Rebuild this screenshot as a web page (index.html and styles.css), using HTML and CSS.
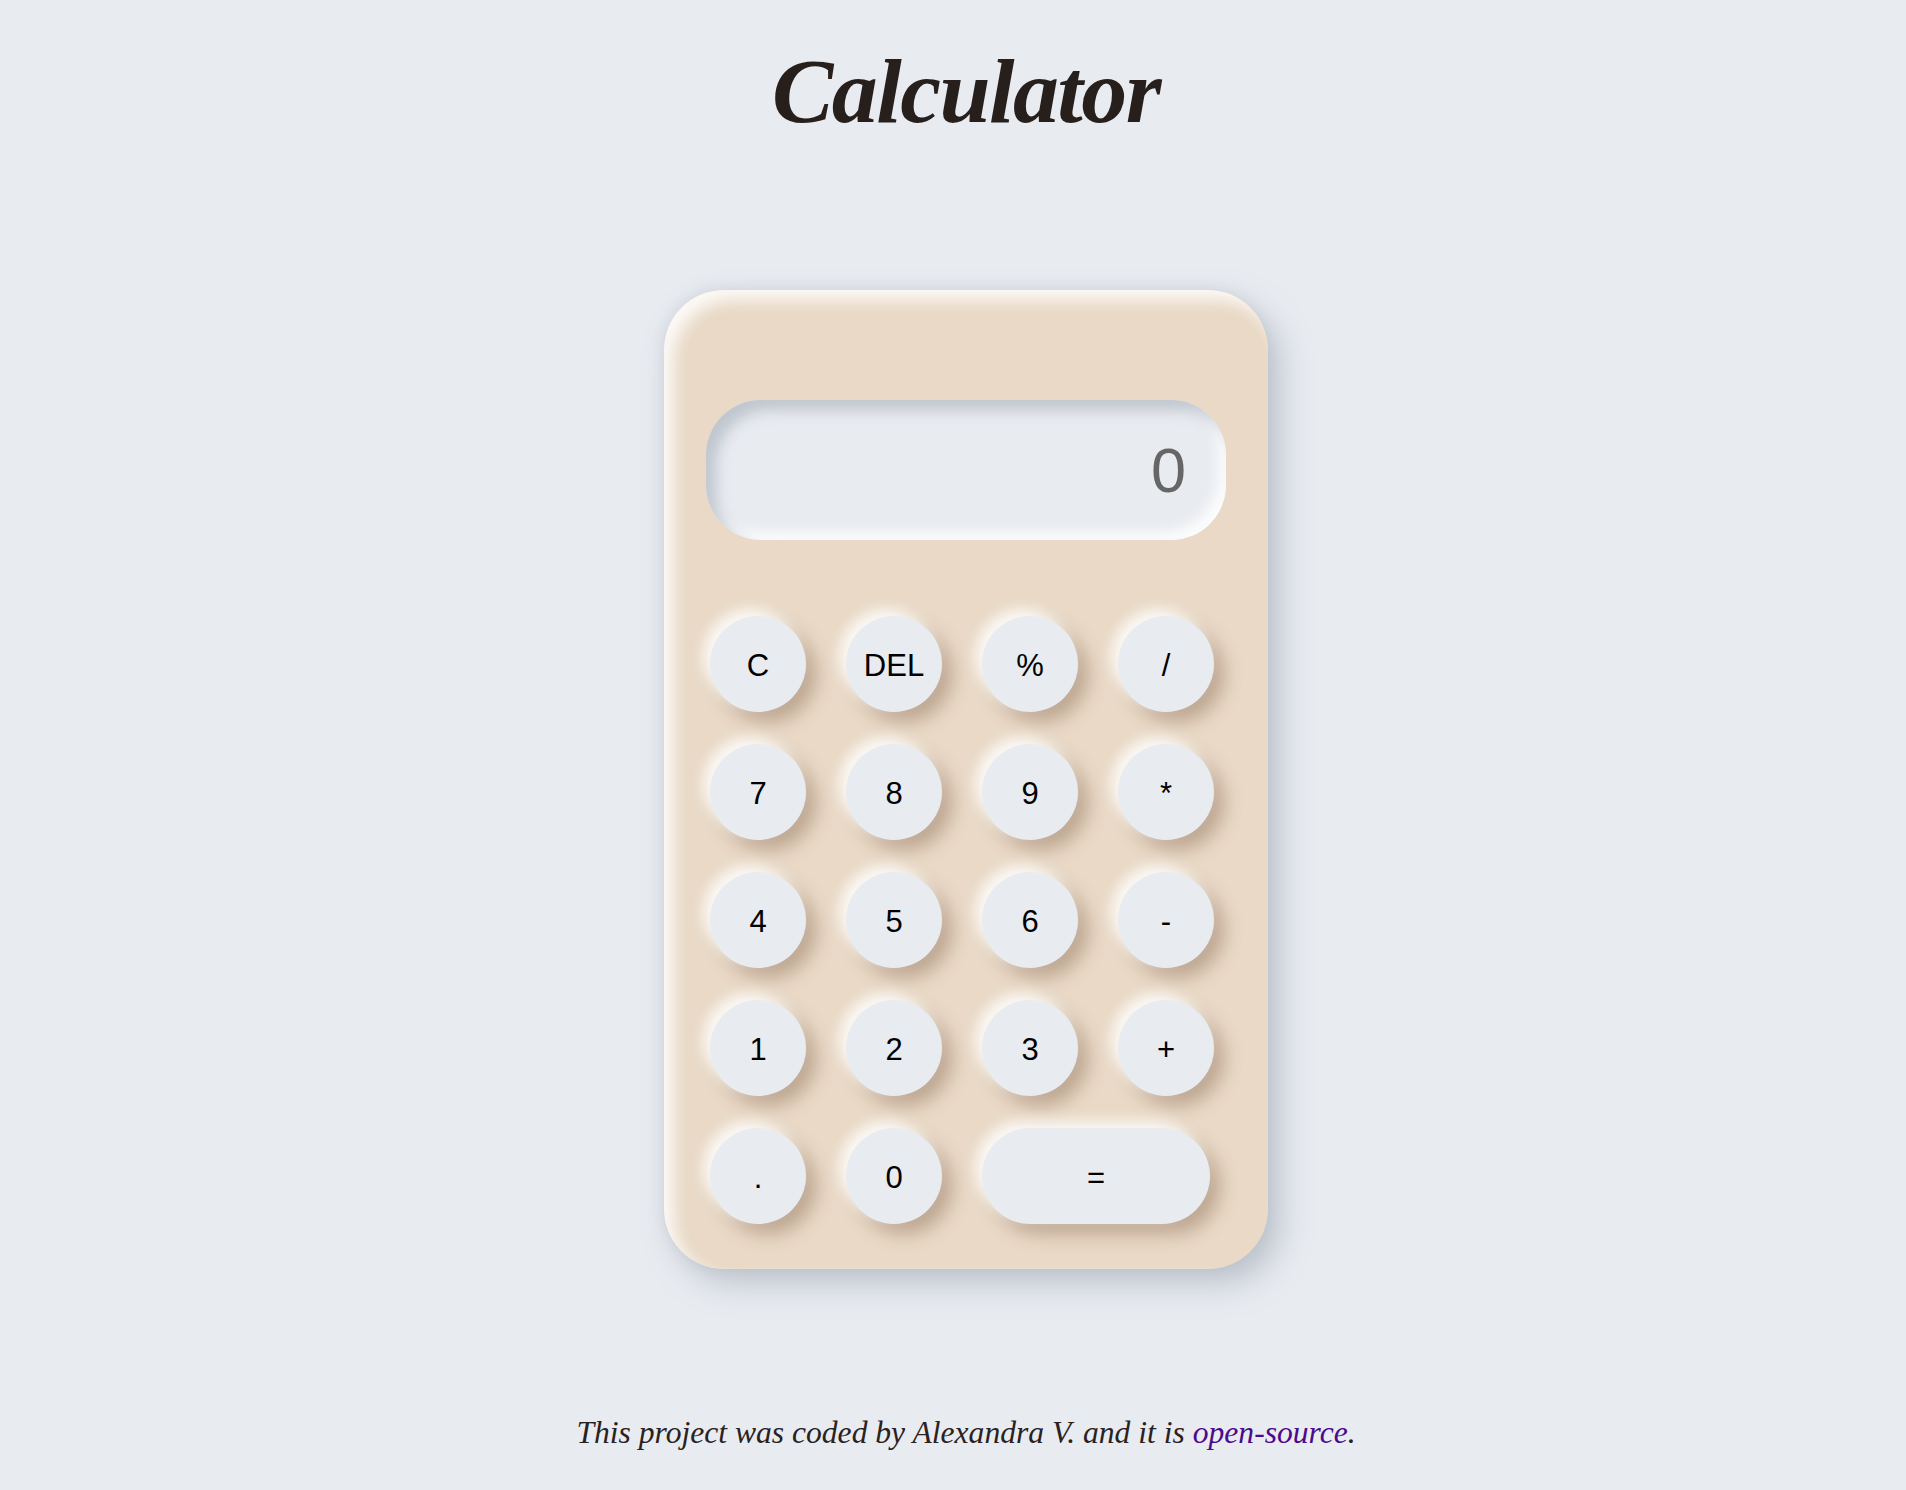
FILE: index.html
```html
<!DOCTYPE html>
<html lang="en">
<head>
<meta charset="utf-8">
<title>Calculator</title>
<link rel="stylesheet" href="styles.css">
</head>
<body>
<div class="page">
  <h1 class="title">Calculator</h1>
  <div class="calculator">
    <div class="display">0</div>
    <div class="keys">
      <button class="key">C</button>
      <button class="key">DEL</button>
      <button class="key">%</button>
      <button class="key">/</button>
      <button class="key">7</button>
      <button class="key">8</button>
      <button class="key">9</button>
      <button class="key">*</button>
      <button class="key">4</button>
      <button class="key">5</button>
      <button class="key">6</button>
      <button class="key">-</button>
      <button class="key">1</button>
      <button class="key">2</button>
      <button class="key">3</button>
      <button class="key">+</button>
      <button class="key">.</button>
      <button class="key">0</button>
      <button class="key key-equals">=</button>
    </div>
  </div>
  <p class="footer">This project was coded by Alexandra V. and it is <a class="footer-link" href="#">open-source</a>.</p>
</div>
</body>
</html>
```
FILE: styles.css
```css
html, body {
  margin: 0;
  padding: 0;
  background: #e8ebf0;
}

.page {
  display: flex;
  flex-direction: column;
  align-items: center;
  padding-left: 26px;
}

.title {
  margin: 45px 0 0;
  font-family: "Liberation Serif", "Times New Roman", serif;
  font-style: italic;
  font-weight: 700;
  font-size: 92px;
  line-height: 92px;
  color: #261f1c;
  letter-spacing: -1.6px;
}

.calculator {
  margin-top: 153px;
  box-sizing: border-box;
  width: 604px;
  height: 979px;
  padding: 110px 42px 45px;
  background: #e9d9c6;
  border-radius: 60px;
  box-shadow:
    12px 14px 30px rgba(145, 155, 170, 0.5),
    -2px -2px 12px rgba(190, 198, 210, 0.35),
    inset 10px 10px 16px rgba(255, 255, 255, 0.85);
}

.display {
  box-sizing: border-box;
  width: 520px;
  height: 140px;
  border-radius: 55px;
  background: #e8ebf0;
  box-shadow:
    inset 10px 10px 14px rgba(165, 173, 185, 0.6),
    inset -8px -8px 14px rgba(255, 255, 255, 0.9);
  padding-right: 40px;
  display: flex;
  align-items: center;
  justify-content: flex-end;
  font-family: "Liberation Sans", Arial, sans-serif;
  font-size: 63px;
  color: #666666;
}

.keys {
  margin: 76px 0 0 4px;
  display: grid;
  grid-template-columns: repeat(4, 96px);
  grid-auto-rows: 96px;
  column-gap: 40px;
  row-gap: 32px;
}

.key {
  width: 96px;
  height: 96px;
  border: none;
  border-radius: 48px;
  background: #e8ebf0;
  font-family: "Liberation Sans", Arial, sans-serif;
  font-size: 31px;
  color: #000;
  padding: 4px 0 0;
  box-shadow:
    -7px -7px 14px rgba(255, 255, 255, 0.85),
    10px 10px 18px rgba(135, 105, 80, 0.45);
}

.key-equals {
  grid-column: span 2;
  width: 228px;
}

.footer {
  margin: 145px 0 0;
  font-family: "Liberation Serif", "Times New Roman", serif;
  font-style: italic;
  font-size: 31.6px;
  line-height: 37px;
  color: #2a221e;
}

.footer-link {
  color: #4b0a8c;
  text-decoration: none;
}
```
